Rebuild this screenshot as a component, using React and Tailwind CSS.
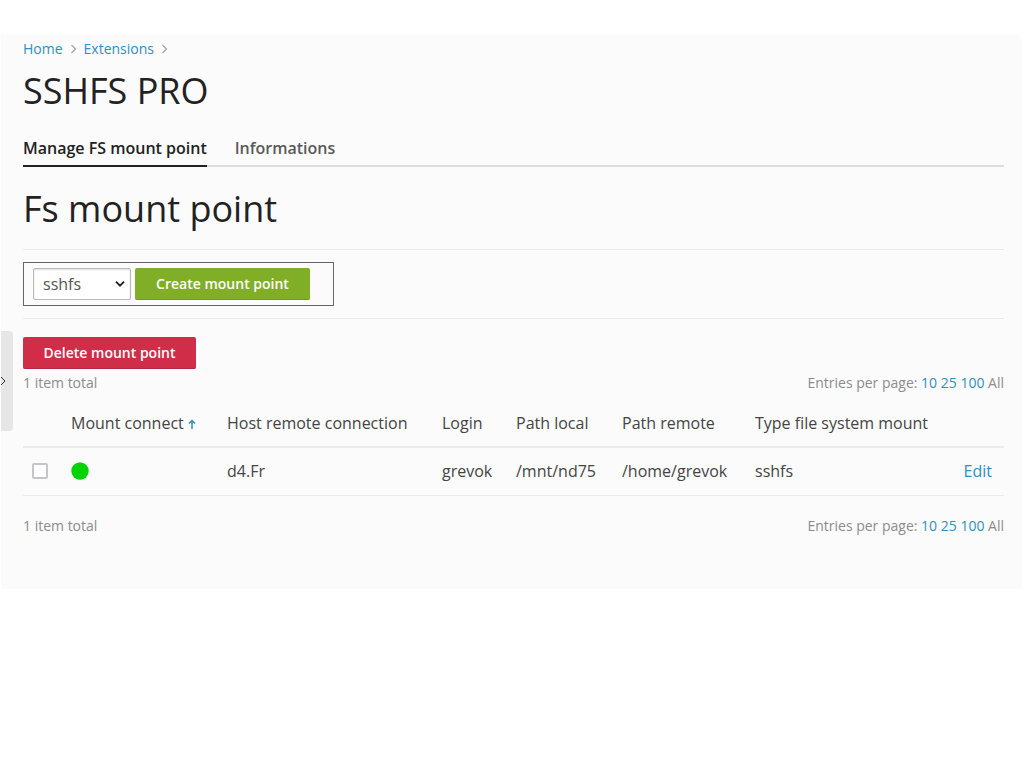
import { ChevronRight } from "lucide-react";

const link = "text-[#2f8fc0] hover:underline";

function Crumb({ children }) {
  return (
    <li className="flex items-center">
      <a href="#" className={link}>{children}</a>
      <svg viewBox="0 0 6 10" className="mx-[7px] h-[10px] w-[7px]" fill="none" stroke="#a5a5a5" strokeWidth="1.3" aria-hidden="true">
        <path d="M1 1l4 4-4 4" />
      </svg>
    </li>
  );
}

function Paging() {
  return (
    <div className="flex justify-between text-sm leading-5 text-[#8c8c8c]">
      <span>1 item total</span>
      <span>
        Entries per page: <a href="#" className={link}>10</a> <a href="#" className={link}>25</a>{" "}
        <a href="#" className={link}>100</a> All
      </span>
    </div>
  );
}

export default function App() {
  return (
    <div className="min-h-screen bg-white pt-[34px] pr-0.5 pl-px font-['Open_Sans','Noto_Sans',sans-serif] text-[#222222]">
      <main className="relative bg-[#fbfbfb] pt-[5px] pr-[18px] pb-[53px] pl-[22px]">
        <button
          type="button"
          aria-label="Show sidebar"
          className="absolute top-[297px] left-0 flex h-[100px] w-3 items-center overflow-hidden rounded-r bg-[#e6e6e6]"
        >
          <ChevronRight className="-ml-1.5 size-4 shrink-0 text-[#333333]" strokeWidth={1.5} />
        </button>

        <nav aria-label="Breadcrumb">
          <ol className="flex text-sm leading-5">
            <Crumb>Home</Crumb>
            <Crumb>Extensions</Crumb>
          </ol>
        </nav>
        <h1 className="mt-[7px] text-4xl leading-[50px] font-normal">SSHFS PRO</h1>

        <nav aria-label="Sections" className="mt-5 flex gap-7 border-b-2 border-[#dddddd] text-base leading-6 font-semibold">
          <a href="#" aria-current="page" className="-mb-0.5 border-b-2 border-[#222222] pb-[5px]">Manage FS mount point</a>
          <a href="#" className="text-[#595959]">Informations</a>
        </nav>

        <h2 className="mt-[17px] text-4xl leading-[50px] font-normal">Fs mount point</h2>

        <div className="mt-[15px] border-y border-[#ebebeb] py-3">
          <form className="flex w-[311px] gap-1 border border-[#666666] py-[5px] pl-[9px]" onSubmit={(e) => e.preventDefault()}>
            <div className="relative">
              <select
                aria-label="File system type"
                defaultValue="sshfs"
                className="h-8 w-[98px] appearance-none rounded-xs border border-[#b8b8b8] bg-white pl-[9px] text-base text-[#555555] shadow-[inset_0_1px_2px_#00000022]"
              >
                <option>sshfs</option>
              </select>
              <svg viewBox="0 0 10 6" className="pointer-events-none absolute top-[13px] right-1.5 h-1.5 w-2.5" fill="none" stroke="#222222" strokeWidth="1.8" aria-hidden="true">
                <path d="M1 .7l4 4 4-4" />
              </svg>
            </div>
            <button type="submit" className="h-8 w-[175px] rounded-xs border-b border-[#71991f] bg-[#80ae26] text-sm font-semibold text-white">
              Create mount point
            </button>
          </form>
        </div>

        <button type="button" className="mt-[18px] mb-1 block h-8 w-[173px] rounded-xs border-b border-[#b32740] bg-[#d02d49] text-sm font-semibold text-white">
          Delete mount point
        </button>
        <Paging />

        <table className="mt-1.5 mb-5 w-full table-fixed text-left text-base">
          <colgroup>
            <col className="w-9" />
            <col className="w-39" />
            <col className="w-[215px]" />
            <col className="w-[74px]" />
            <col className="w-[106px]" />
            <col className="w-[133px]" />
            <col className="w-[185px]" />
            <col />
          </colgroup>
          <thead>
            <tr className="h-12 border-b-2 border-[#ebebeb] whitespace-nowrap text-[#444444]">
              <td />
              <th scope="col" aria-sort="ascending" className="pl-3 font-normal">
                Mount connect
                <svg viewBox="0 0 8 10" className="ml-1 inline h-2.5 w-2" fill="none" stroke="#2f8fc0" strokeWidth="1.5" aria-hidden="true">
                  <path d="M4 10V1.5M1 4.5l3-3 3 3" />
                </svg>
              </th>
              <th scope="col" className="pl-3 font-normal">Host remote connection</th>
              <th scope="col" className="pl-3 font-normal">Login</th>
              <th scope="col" className="pl-3 font-normal">Path local</th>
              <th scope="col" className="pl-3 font-normal">Path remote</th>
              <th scope="col" className="pl-3 font-normal">Type file system mount</th>
              <td />
            </tr>
          </thead>
          <tbody>
            <tr className="h-12 border-b border-[#ebebeb] text-[#444444]">
              <td className="pl-[9px]">
                <input type="checkbox" aria-label="Select d4.Fr" className="block size-4 appearance-none rounded-xs border-2 border-[#c5c5ca] bg-white checked:bg-[#2f8fc0]" />
              </td>
              <td className="pl-3">
                <svg viewBox="0 0 18 18" className="size-[18px]" role="img" aria-label="Connected">
                  <circle cx="9" cy="9" r="8.7" fill="#00d400" />
                </svg>
              </td>
              <td className="pl-3">d4.Fr</td>
              <td className="pl-3">grevok</td>
              <td className="pl-3">/mnt/nd75</td>
              <td className="pl-3">/home/grevok</td>
              <td className="pl-3">sshfs</td>
              <td className="pr-3 text-right"><a href="#" className={link}>Edit</a></td>
            </tr>
          </tbody>
        </table>
        <Paging />
      </main>
    </div>
  );
}
